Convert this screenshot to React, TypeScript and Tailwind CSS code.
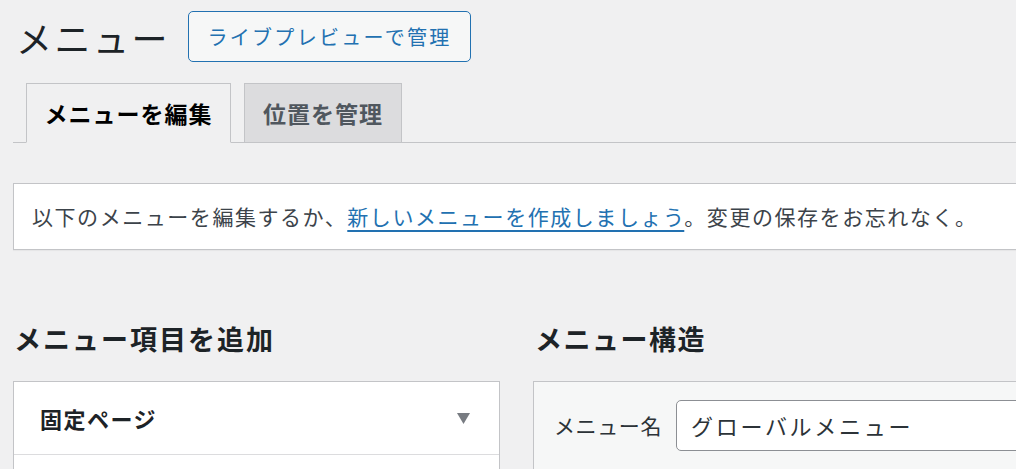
import React from "react";

export default function App() {
  const font = { fontFamily: '"Noto Sans CJK JP", "Noto Sans", sans-serif' };
  return (
    <div
      className="w-[1016px] h-[469px] overflow-hidden bg-[#f0f0f1] text-[#3c434a]"
      style={font}
    >
      <div className="w-[1060px] pl-[13px]">
        {/* Header */}
        <div className="flex items-center mt-[11px] h-[51px] pl-[3px]">
          <h1 className="text-[36px] leading-none tracking-[2.5px] text-[#1d2327] font-normal">
            メニュー
          </h1>
          <button className="ml-[18px] h-[51px] w-[283px] shrink-0 rounded-[5px] border border-[#2271b1] bg-[#f6f7f7] text-[20px] tracking-[2.3px] text-[#2271b1] leading-none">
            ライブプレビューで管理
          </button>
        </div>

        {/* Tabs */}
        <div className="mt-[21px] flex border-b border-[#c3c4c7] pl-[13px]">
          <div className="-mb-px flex h-[60px] w-[205px] items-center justify-center border border-[#c3c4c7] border-b-[#f0f0f1] bg-[#f0f0f1] text-[23px] font-bold tracking-[1px] text-black">
            メニューを編集
          </div>
          <div className="ml-[13px] -mb-px flex h-[60px] w-[158px] items-center justify-center border border-[#c3c4c7] bg-[#dcdcde] text-[23px] font-bold tracking-[1px] text-[#50575e]">
            位置を管理
          </div>
        </div>

        {/* Notice */}
        <div className="mt-[40px] flex h-[67px] items-center border border-[#c3c4c7] bg-white pl-[18px] text-[21px] tracking-[1.55px] text-[#3c434a] shadow-[0_1px_1px_rgba(0,0,0,0.04)]">
          <span className="whitespace-nowrap">
            以下のメニューを編集するか、
            <a className="text-[#2271b1] underline underline-offset-[5px]">
              新しいメニューを作成しましょう
            </a>
            。変更の保存をお忘れなく。
          </span>
        </div>

        {/* Columns */}
        <div className="mt-[73px] flex gap-[33px]">
          <div className="w-[487px] shrink-0">
            <h2 className="pl-[1px] text-[27px] font-bold leading-[32px] tracking-[2px] text-[#1d2327] whitespace-nowrap">
              メニュー項目を追加
            </h2>
            <div className="mt-[26px] h-[200px] border border-[#c3c4c7] bg-white">
              <div className="flex h-[73px] items-center justify-between border-b border-[#dcdcde] pl-[26px] pr-[29px]">
                <span className="text-[22px] font-bold tracking-[1.5px] text-[#1d2327]">
                  固定ページ
                </span>
                <svg width="13" height="11" viewBox="0 0 13 11">
                  <path d="M0 0 H13 L6.5 11 Z" fill="#787c82" />
                </svg>
              </div>
            </div>
          </div>
          <div className="flex-1">
            <h2 className="pl-[2px] text-[27px] font-bold leading-[32px] tracking-[1.5px] text-[#1d2327] whitespace-nowrap">
              メニュー構造
            </h2>
            <div className="mt-[26px] h-[200px] border border-[#c3c4c7] bg-[#f6f7f7] pl-[20px] pt-[18px]">
              <div className="flex items-center">
                <span className="shrink-0 whitespace-nowrap text-[21px] tracking-[0.6px] text-[#2c3338]">
                  メニュー名
                </span>
                <div className="ml-[14px] flex h-[51px] w-[500px] shrink-0 items-center rounded-[5px] border border-[#8c8f94] bg-white pl-[14px] text-[22px] tracking-[2.7px] text-[#2c3338]">
                  グローバルメニュー
                </div>
              </div>
            </div>
          </div>
        </div>
      </div>
    </div>
  );
}
